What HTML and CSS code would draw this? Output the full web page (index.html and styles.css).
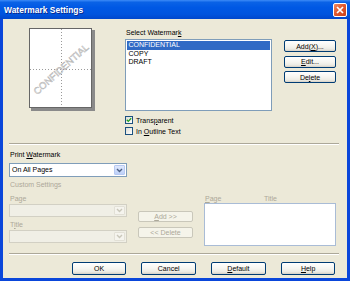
FILE: index.html
```html
<!DOCTYPE html>
<html>
<head>
<meta charset="utf-8">
<link rel="stylesheet" href="styles.css">
</head>
<body>
<div class="window">
  <div class="titlebar">
    <span class="title">Watermark Settings</span>
    <span class="close"><svg width="12" height="12" viewBox="0 0 12 12"><path d="M3 3L9 9M9 3L3 9" class="close-x"/></svg></span>
  </div>
  <div class="frame">
    <div class="top">
      <svg class="preview" width="66" height="83" viewBox="0 0 66 83">
        <rect x="2" y="2" width="64" height="81" class="pv-shadow"/>
        <rect x="0.5" y="0.5" width="62" height="79" class="pv-page"/>
        <line x1="32.5" y1="1" x2="32.5" y2="79" class="pv-dot"/>
        <line x1="1" y1="41.5" x2="62" y2="41.5" class="pv-dot"/>
        <text x="32" y="41" transform="rotate(-42 32 41)" class="pv-text">CONFIDENTIAL</text>
      </svg>
      <div class="select-col">
        <div class="label indent">Select Watermar<u>k</u></div>
        <div class="listbox">
          <div class="item sel">CONFIDENTIAL</div>
          <div class="item">COPY</div>
          <div class="item">DRAFT</div>
        </div>
        <div class="check first"><span class="box"><svg width="6" height="6" viewBox="0 0 6 6"><path d="M0.8 2.8L2.3 4.4L5.2 1.2" class="tick"/></svg></span><span>Trans<u>p</u>arent</span></div>
        <div class="check"><span class="box"></span><span>In <u>O</u>utline Text</span></div>
      </div>
      <div class="btn-col">
        <div class="btn">Add(<u>X</u>)...</div>
        <div class="btn"><u>E</u>dit...</div>
        <div class="btn">De<u>l</u>ete</div>
      </div>
    </div>
    <div class="sep sep-1"></div>
    <div class="lower">
      <div class="left-col">
        <div class="label indent pw-label">Print <u>W</u>atermark</div>
        <div class="combo first-combo">
          <span class="combo-text">On All Pages</span>
          <span class="arrow"><svg width="7" height="5" viewBox="0 0 7 5"><path d="M1 1L3.5 3.5L6 1" class="chev"/></svg></span>
        </div>
        <div class="label indent dis cs-label">Custom Settings</div>
        <div class="label indent dis page-label">Page</div>
        <div class="combo dis-combo">
          <span class="combo-text"></span>
          <span class="arrow"><svg width="7" height="5" viewBox="0 0 7 5"><path d="M1 1L3.5 3.5L6 1" class="chev"/></svg></span>
        </div>
        <div class="label indent dis title-label">T<u>i</u>tle</div>
        <div class="combo dis-combo">
          <span class="combo-text"></span>
          <span class="arrow"><svg width="7" height="5" viewBox="0 0 7 5"><path d="M1 1L3.5 3.5L6 1" class="chev"/></svg></span>
        </div>
      </div>
      <div class="mid-col">
        <div class="btn small dis-btn"><u>A</u>dd &gt;&gt;</div>
        <div class="btn small dis-btn">&lt;&lt; Delete</div>
      </div>
      <div class="right-col">
        <div class="rlabels dis"><span class="rl-page"><u>P</u>age</span><span>Title</span></div>
        <div class="rlist"></div>
      </div>
    </div>
    <div class="sep sep-2"></div>
    <div class="footer">
      <div class="btn fbtn">OK</div>
      <div class="btn fbtn">Cancel</div>
      <div class="btn fbtn"><u>D</u>efault</div>
      <div class="btn fbtn"><u>H</u>elp</div>
    </div>
  </div>
</div>
</body>
</html>
```

FILE: styles.css
```css
* { box-sizing: border-box; }
html, body { margin: 0; padding: 0; }
body {
  width: 350px;
  height: 281px;
  overflow: hidden;
  font-family: "Liberation Sans", Arial, sans-serif;
  font-size: 7px;
  color: #000;
  background: #0841D8;
}
u { text-decoration: underline; text-underline-offset: 1px; }

.window {
  width: 350px;
  height: 281px;
  display: flex;
  flex-direction: column;
  background: #0A46DA;
}
.titlebar {
  height: 19px;
  flex: none;
  display: flex;
  align-items: center;
  justify-content: space-between;
  padding: 0 3px 0 4px;
  background: linear-gradient(#3D8BF7 0%, #0A62E6 12%, #0058E4 40%, #0054DE 75%, #0047CC 100%);
}
.title {
  color: #fff;
  font-weight: bold;
  font-size: 8.4px;
  letter-spacing: 0.05px;
  text-shadow: 1px 1px 0 #0B2A8E;
}
.close {
  width: 14px;
  height: 14px;
  border: 1px solid #fff;
  border-radius: 2px;
  background: linear-gradient(135deg, #F08A62 0%, #E25A2F 45%, #C7401A 100%);
  display: flex;
  align-items: center;
  justify-content: center;
}
.close-x { stroke: #fff; stroke-width: 1.7; fill: none; }

.frame {
  flex: 1;
  margin: 0 3px 3px;
  background: #ECE9D8;
  display: flex;
  flex-direction: column;
}

/* top area */
.top {
  display: flex;
  align-items: flex-start;
  padding: 9px 0 0 26px;
}
.preview { flex: none; display: block; }
.pv-shadow { fill: #8a8a8a; }
.pv-page { fill: #fff; stroke: #666; stroke-width: 1; }
.pv-dot { stroke: #9a9a9a; stroke-width: 1; stroke-dasharray: 1 2; }
.pv-text {
  font-family: "Liberation Sans", Arial, sans-serif;
  font-size: 9.6px;
  fill: #ffffff;
  stroke: #a8a8a8;
  stroke-width: 0.45;
  text-anchor: middle;
  dominant-baseline: central;
}

.select-col { margin-left: 30px; width: 147px; flex: none; }
.label { line-height: 9px; height: 9px; white-space: nowrap; }
.indent { padding-left: 1px; }
.listbox {
  margin-top: 2px;
  height: 72px;
  border: 1px solid #7F9DB9;
  background: #fff;
  padding: 1px;
}
.item { height: 8.7px; line-height: 8.7px; padding-left: 1.5px; }
.item.sel { background: #316AC5; color: #fff; }
.check { display: flex; align-items: center; height: 8px; margin-top: 3px; gap: 3px; white-space: nowrap; }
.check.first { margin-top: 5px; }
.box {
  width: 8px;
  height: 8px;
  flex: none;
  border: 1px solid #1C5180;
  background: linear-gradient(135deg, #DCDCD5, #fff);
  display: flex;
  align-items: center;
  justify-content: center;
}
.tick { fill: none; stroke: #21A121; stroke-width: 1.3; }

.btn-col {
  margin-left: 12px;
  padding-top: 12px;
  display: flex;
  flex-direction: column;
  gap: 3.5px;
}
.btn {
  width: 52px;
  height: 12px;
  border: 1px solid #003C74;
  border-radius: 2px;
  background: linear-gradient(#FFFFFF 0%, #F6F5F0 50%, #ECEBE4 80%, #D6D0C5 100%);
  display: flex;
  align-items: center;
  justify-content: center;
  white-space: nowrap;
  line-height: 9px;
}

.sep {
  flex: none;
  height: 2px;
  border-top: 1px solid #ACA899;
  border-bottom: 1px solid #fff;
  margin: 0 8px 0 6px;
}
.sep-1 { margin-top: 8px; }
.sep-2 { margin-top: 7px; }

/* lower area */
.lower { display: flex; align-items: flex-start; padding-left: 6px; }
.left-col { width: 118px; flex: none; }
.pw-label { margin-top: 5px; }
.combo {
  display: flex;
  height: 13px;
  border: 1px solid #7F9DB9;
  background: #fff;
}
.first-combo { margin-top: 4px; height: 14px; }
.combo-text { flex: 1; padding-left: 2px; line-height: 12px; white-space: nowrap; }
.arrow {
  width: 11px;
  margin: 1px;
  border: 1px solid #B7C9F2;
  border-radius: 1px;
  background: linear-gradient(#E0E9FD, #BDD0F8);
  display: flex;
  align-items: center;
  justify-content: center;
}
.chev { fill: none; stroke: #4D6185; stroke-width: 1.4; }
.dis { color: #ACA899; }
.cs-label { margin-top: 3px; }
.page-label { margin-top: 4.7px; }
.title-label { margin-top: 2.7px; }
.dis-combo { margin-top: 1.3px; border-color: #D2D0C4; background: #F0EFE6; }
.dis-combo .arrow { border-color: #E2E0D6; background: #F5F4EE; }
.dis-combo .chev { stroke: #C9C7BA; }

.mid-col {
  margin-left: 11px;
  padding-top: 66px;
  display: flex;
  flex-direction: column;
  gap: 5px;
}
.small { width: 55px; height: 11px; }
.dis-btn { border-color: #C9C7BA; background: #F5F4EA; color: #ACA899; }

.right-col { margin-left: 11px; padding-top: 49px; width: 132px; flex: none; }
.rlabels { display: flex; height: 9px; line-height: 9px; }
.rl-page { width: 60px; padding-left: 1px; }
.rlist { height: 43px; border: 1px solid #A9BCD6; background: #fff; }

/* footer */
.footer {
  display: flex;
  gap: 15px;
  padding-left: 68.7px;
  margin-top: 7px;
}
.fbtn { width: 54.7px; height: 12.5px; }
```
